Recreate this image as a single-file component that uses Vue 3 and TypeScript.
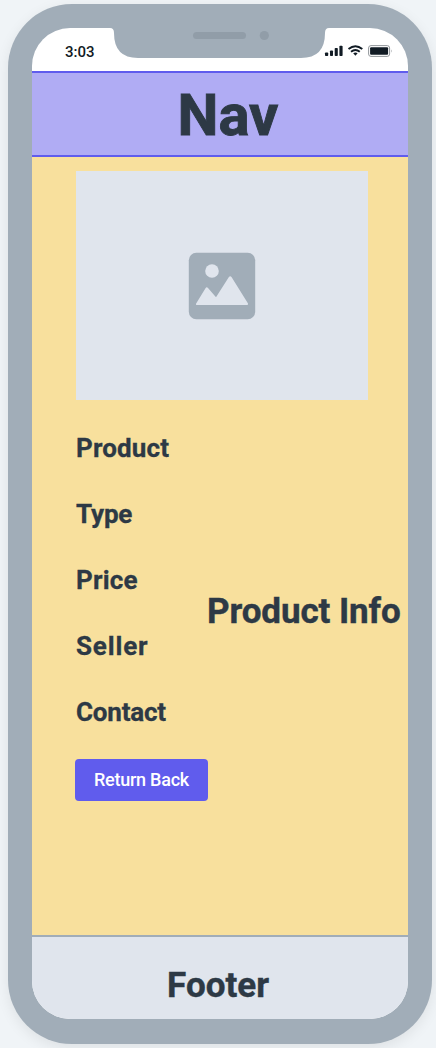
<script setup lang="ts">
interface Field {
  label: string
  tracking: number
}

const fields: Field[] = [
  { label: 'Product', tracking: 0.15 },
  { label: 'Type', tracking: -0.15 },
  { label: 'Price', tracking: 0.2 },
  { label: 'Seller', tracking: 0.85 },
  { label: 'Contact', tracking: -0.2 },
]
</script>

<template>
  <div class="stage">
    <div class="phone">
      <div class="screen">
        <header class="status">
          <span class="time">3:03</span>
          <svg class="signals" width="70" height="14" viewBox="0 0 70 14">
            <g fill="#111b24">
              <rect x="1" y="8.5" width="3.2" height="3.5" rx="0.8" />
              <rect x="6" y="6.5" width="3" height="5.5" rx="0.8" />
              <rect x="10.7" y="4" width="3.1" height="8" rx="0.8" />
              <rect x="15.4" y="1.8" width="3.2" height="10.2" rx="0.8" />
              <path d="M29.2 9.3q2.2-1.6 4.4 0l-2.2 2.5z" />
            </g>
            <g fill="none" stroke="#111b24" stroke-width="1.9">
              <path d="M24.5 5.1q6.9-5.8 13.8 0" />
              <path d="M27 7.7q4.4-3.5 8.8 0" />
            </g>
            <rect x="44.6" y="1.6" width="21" height="10.8" rx="2.4" fill="#fff" stroke="#92979b" />
            <rect x="46.1" y="3.2" width="18" height="7.6" rx="1" fill="#111b24" />
            <path d="M67 5.2q1.6 1.8 0 3.6z" fill="#a7abae" />
          </svg>
        </header>
        <nav class="nav">Nav</nav>
        <main class="body">
          <div class="picture">
            <svg width="68" height="68" viewBox="0 0 68 68">
              <rect x="0.8" y="0.8" width="66.4" height="66.4" rx="7.5" fill="#a1adb8" />
              <circle cx="24" cy="19" r="6.8" fill="#e0e5ed" />
              <path
                d="M8 51.8L17.5 36.2Q18.7 34.5 20 36L28 45.2L40.9 25.1Q42.2 23.4 43.5 25.1L60 51.5Q60.4 53 59 53H8.8Q7.5 53 8 51.8Z"
                fill="#e0e5ed"
              />
            </svg>
          </div>
          <div class="details">
            <ul class="fields">
              <li v-for="field in fields" :key="field.label" :style="{ letterSpacing: field.tracking + 'px' }">
                {{ field.label }}
              </li>
            </ul>
            <h2 class="info">Product Info</h2>
          </div>
          <button class="back" type="button">Return Back</button>
        </main>
        <footer class="footer">Footer</footer>
      </div>
      <svg class="notch" width="219" height="31" viewBox="0 0 219 31">
        <path d="M0 0H219Q215 0 215 5Q215 30 191 30H28Q4 30 4 5Q4 0 0 0Z" fill="#a1adb8" />
        <rect x="83" y="4" width="53" height="7" rx="3.5" fill="#919da8" />
        <circle cx="154.3" cy="7.5" r="4.6" fill="#919da8" />
      </svg>
    </div>
  </div>
</template>

<style>
body {
  margin: 0;
  background: #f0f4f7;
}
</style>

<style scoped>
.stage {
  box-sizing: border-box;
  width: 436px;
  height: 1048px;
  padding: 4px 4px 4px 8px;
  overflow: hidden;
  background: #f0f4f7;
  color: #2d3945;
  font-family: Roboto, "Liberation Sans", sans-serif;
}
.phone {
  position: relative;
  box-sizing: border-box;
  width: 424px;
  height: 1040px;
  padding: 24px 24px 25px;
  border-radius: 64px;
  background: #a1adb8;
  box-shadow: 0 4px 14px rgba(0, 0, 0, 0.08);
}
.screen {
  display: flex;
  flex-direction: column;
  height: 991px;
  overflow: hidden;
  border-radius: 38px;
  background: #fff;
}
.status {
  display: flex;
  box-sizing: border-box;
  height: 43px;
  padding: 16px 14px 0 33px;
  justify-content: space-between;
}
.time {
  color: #111b24;
  font-size: 15px;
  line-height: 16px;
  font-weight: 500;
}
.signals {
  margin-right: 0;
}
.notch {
  position: absolute;
  left: 102px;
  top: 24px;
}
.nav {
  box-sizing: border-box;
  height: 86px;
  border-top: 2px solid #605ced;
  border-bottom: 2px solid #605ced;
  background: #b0acf4;
  font-size: 58px;
  font-weight: 700;
  line-height: 84px;
  text-align: center;
  padding-left: 16px;
  -webkit-text-stroke: 0.9px #2d3945;
}
.body {
  flex: 1;
  padding: 14px 0 0 44px;
  background: #f8e09d;
}
.picture {
  display: grid;
  width: 292px;
  height: 229px;
  place-items: center;
  background: #e0e5ed;
}
.details {
  display: flex;
  margin-top: 15px;
}
.fields {
  width: 131px;
  margin: 0;
  padding: 0;
  list-style: none;
  font-size: 26px;
  font-weight: 700;
  line-height: 66px;
  -webkit-text-stroke: 0.3px #2d3945;
}
.info {
  margin: 179px 0 0;
  font-size: 35px;
  font-weight: 700;
  line-height: 36px;
  letter-spacing: -0.1px;
  white-space: nowrap;
  -webkit-text-stroke: 0.4px #2d3945;
}
.back {
  display: block;
  width: 133px;
  height: 42px;
  margin: 14px 0 0 -1px;
  padding: 0;
  border: 0;
  border-radius: 4px;
  background: #605ced;
  color: #fff;
  font: 500 18px/42px Roboto, "Liberation Sans", sans-serif;
  letter-spacing: -0.25px;
}
.footer {
  box-sizing: border-box;
  height: 84px;
  padding-right: 4px;
  border-top: 2px solid #a1adb8;
  background: #e0e5ed;
  font-size: 35px;
  font-weight: 700;
  line-height: 98px;
  text-align: center;
  -webkit-text-stroke: 0.4px #2d3945;
}
</style>
